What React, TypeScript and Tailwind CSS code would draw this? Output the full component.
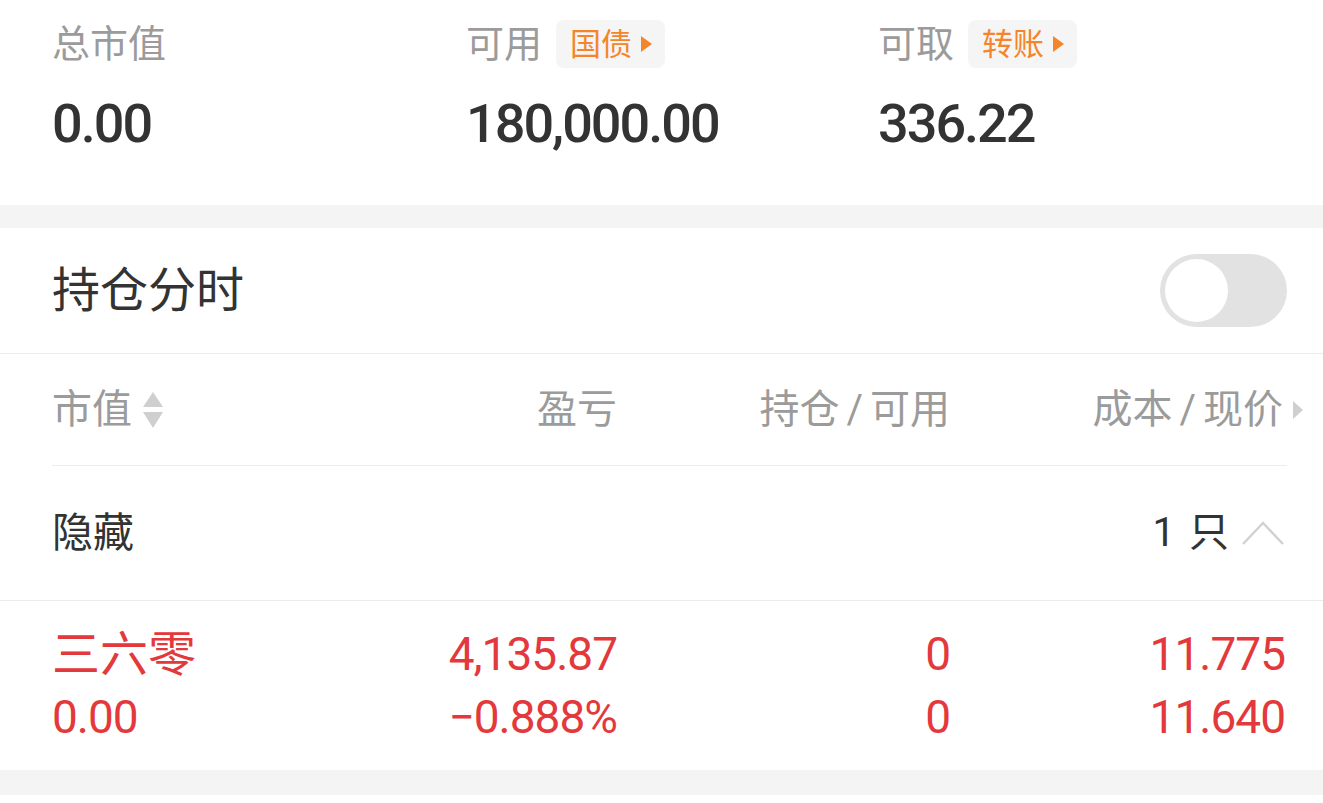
import React from "react";

const font = { fontFamily: 'Roboto, "Noto Sans CJK SC", sans-serif' };

// 小标签按钮（国债 / 转账）
function Tag({ text }: { text: string }) {
  return (
    <div className="ml-[14px] flex h-[48px] items-center rounded-[8px] bg-[#f5f5f5] pl-[14px] pr-[12px]">
      <span className="text-[31px] leading-none text-[#f5852b]">{text}</span>
      <svg width="13" height="18" viewBox="0 0 13 18" className="ml-[8px]">
        <path d="M1 1 L12 9 L1 17 Z" fill="#f5852b" />
      </svg>
    </div>
  );
}

function Summary({
  label,
  value,
  tag,
  width,
}: {
  label: string;
  value: string;
  tag?: string;
  width: string;
}) {
  return (
    <div className={width}>
      <div className="flex h-[48px] items-center">
        <span className="text-[38px] leading-none text-[#9b9b9b]">{label}</span>
        {tag && <Tag text={tag} />}
      </div>
      <div className="mt-[26px] text-[54px] font-medium leading-[60px] tracking-[-2px] text-[#333]">
        {value}
      </div>
    </div>
  );
}

export default function App() {
  return (
    <div className="h-[803px] w-[1323px] overflow-hidden bg-white" style={font}>
      {/* 资产概览 */}
      <div className="flex h-[205px] pl-[52px] pt-[20px]">
        <Summary label="总市值" value="0.00" width="w-[414px]" />
        <Summary label="可用" value="180,000.00" tag="国债" width="w-[412px]" />
        <Summary label="可取" value="336.22" tag="转账" width="w-[300px]" />
      </div>

      <div className="h-[23px] bg-[#f4f4f4]" />

      {/* 持仓 */}
      <div className="h-[542px]">
        <div className="flex h-[125px] items-center justify-between pl-[52px] pr-[36px]">
          <span className="text-[48px] leading-none text-[#333]">持仓分时</span>
          <div className="flex h-[73px] w-[127px] items-center rounded-full bg-[#e2e2e2] pl-[5px]">
            <div className="h-[63px] w-[63px] rounded-full bg-white" />
          </div>
        </div>
        <div className="h-px bg-[#ececec]" />

        {/* 表头 */}
        <div className="flex h-[111px] items-center pl-[52px] pr-[36px] text-[40px] leading-none text-[#9b9b9b]">
          <div className="flex w-[200px] items-center">
            <span>市值</span>
            <svg width="22" height="38" viewBox="0 0 22 38" className="ml-[10px]">
              <path d="M11 1 L21 16 L1 16 Z" fill="#cfcfcf" />
              <path d="M1 21 L21 21 L11 37 Z" fill="#cfcfcf" />
            </svg>
          </div>
          <div className="w-[365px] text-right">盈亏</div>
          <div className="w-[333px] text-right">
            持仓<span className="px-[7px]">/</span>可用
          </div>
          <div className="relative mr-[4px] flex-1 text-right">
            成本<span className="px-[7px]">/</span>现价
            <svg
              width="10"
              height="18"
              viewBox="0 0 10 18"
              className="absolute right-[-20px] top-1/2 -translate-y-1/2"
            >
              <path d="M0 0 L10 9 L0 18 Z" fill="#cfcfcf" />
            </svg>
          </div>
        </div>
        <div className="ml-[52px] mr-[36px] h-px bg-[#ececec]" />

        {/* 隐藏 */}
        <div className="flex h-[134px] items-center justify-between pl-[52px] pr-[38px] text-[40px] leading-none text-[#333]">
          <span className="text-[41px]">隐藏</span>
          <div className="flex items-center">
            <span>1</span>
            <span className="ml-[14px]">只</span>
            <svg width="44" height="26" viewBox="0 0 44 26" className="ml-[12px]">
              <path d="M2 24 L22 3 L42 24" fill="none" stroke="#d2d2d2" strokeWidth="2.5" />
            </svg>
          </div>
        </div>
        <div className="h-px bg-[#ececec]" />

        {/* 持仓明细 */}
        <div className="flex h-[169px] items-center pl-[52px] pr-[38px] text-[46px] leading-[63px] tracking-[-1px] text-[#e4393c]">
          <div className="w-[200px]">
            <div className="text-[48px] tracking-normal">三六零</div>
            <div>0.00</div>
          </div>
          <div className="w-[365px] text-right">
            <div>4,135.87</div>
            <div>−0.888%</div>
          </div>
          <div className="w-[333px] text-right">
            <div>0</div>
            <div>0</div>
          </div>
          <div className="flex-1 text-right">
            <div>11.775</div>
            <div>11.640</div>
          </div>
        </div>
      </div>

      <div className="h-[25px] bg-[#f4f4f4]" />
    </div>
  );
}
